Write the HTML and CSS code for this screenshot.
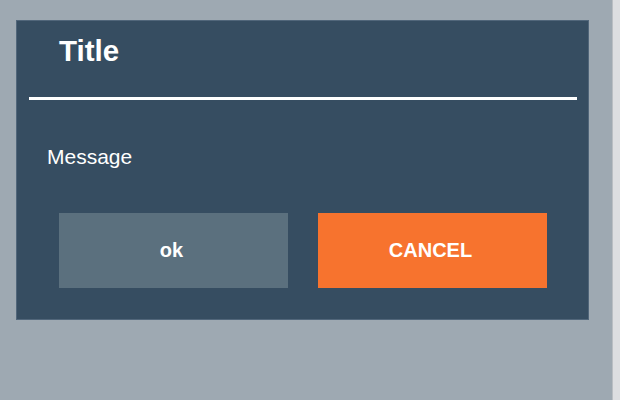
FILE: index.html
```html
<!DOCTYPE html>
<html lang="en">
<head>
<meta charset="utf-8">
<title>Dialog</title>
<link rel="stylesheet" href="styles.css">
</head>
<body>
<div class="page">
  <main class="stage">
    <section class="dialog">
      <h1 class="dialog-title">Title</h1>
      <hr class="dialog-rule">
      <p class="dialog-message">Message</p>
      <div class="dialog-actions">
        <button class="btn btn-ok">ok</button>
        <button class="btn btn-cancel">CANCEL</button>
      </div>
    </section>
  </main>
  <div class="scrollbar"></div>
</div>
</body>
</html>
```
FILE: styles.css
```css
html, body {
  margin: 0;
  padding: 0;
}
body {
  font-family: "Liberation Sans", Arial, Helvetica, sans-serif;
}
.page {
  display: flex;
  width: 620px;
  height: 400px;
}
.stage {
  flex: 1;
  background: #9ea9b2;
  padding: 20px 0 0 16px;
}
.scrollbar {
  width: 7px;
  background: #dcdee1;
  border-left: 1px solid #b9bec3;
}
.dialog {
  box-sizing: border-box;
  width: 573px;
  background: #364d61;
  border: 1px solid #51667a;
  padding: 13px 0 31px 0;
  color: #ffffff;
}
.dialog-title {
  margin: 0 0 0 42px;
  font-size: 29.5px;
  line-height: 34px;
  font-weight: bold;
}
.dialog-rule {
  margin: 29px 11px 0 12px;
  height: 3px;
  border: 0;
  background: #ffffff;
}
.dialog-message {
  margin: 45px 0 0 30px;
  font-size: 21px;
  line-height: 24px;
}
.dialog-actions {
  display: flex;
  gap: 30px;
  margin-top: 44px;
  padding-left: 42px;
}
.btn {
  width: 229px;
  height: 75px;
  border: 0;
  padding: 0 4px 0 0;
  font-family: "Liberation Sans", Arial, Helvetica, sans-serif;
  font-size: 20px;
  font-weight: bold;
  color: #ffffff;
}
.btn-ok {
  background: #5b707e;
}
.btn-cancel {
  background: #f7732e;
}
```
